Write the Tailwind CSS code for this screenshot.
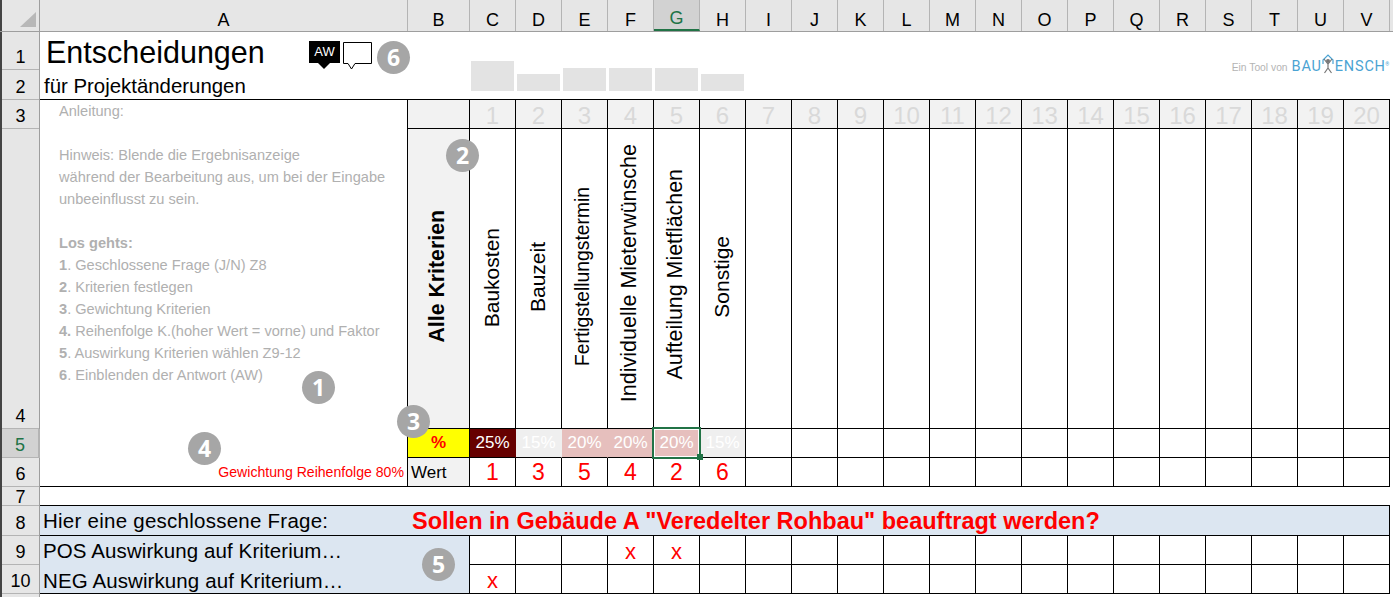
<!DOCTYPE html>
<html lang="de">
<head>
  <meta charset="UTF-8" />
  <title>Entscheidungen</title>
  <script src="https://cdn.jsdelivr.net/npm/@tailwindcss/browser@4"></script>
</head>
<body class="relative w-[1393px] h-[597px] overflow-hidden bg-white text-black font-['Liberation_Sans',Arial,sans-serif]">

  <!-- column headers -->
  <div class="flex h-8 bg-[#e6e6e6] border-b border-[#9e9e9e] text-[18px] leading-[22px] [&>div]:flex [&>div]:items-end [&>div]:justify-center [&>div]:border-r [&>div]:border-[#b4b4b4] [&>div]:w-[46px]">
    <div class="!w-10 relative !border-[#9e9e9e] border-l-2 !border-l-[#444]">
      <svg class="absolute left-0 top-0" width="38" height="31"><polygon points="18,27 34,12 34,27" fill="#b8b8b8" /></svg>
    </div>
    <div class="!w-[368px]">A</div>
    <div class="!w-[62px]">B</div>
    <div>C</div><div>D</div><div>E</div><div>F</div>
    <div class="bg-[#d2d2d2] text-[#217346] border-b-2 !border-b-[#217346]">G</div>
    <div>H</div><div>I</div><div>J</div><div>K</div><div>L</div><div>M</div><div>N</div><div>O</div><div>P</div><div>Q</div><div>R</div><div>S</div><div>T</div><div>U</div><div>V</div>
    <div class="!w-[3px] !border-0"></div>
  </div>

  <div class="flex">
    <!-- row headers -->
    <div class="w-10 border-l-2 border-[#444] bg-[#e6e6e6] text-[18px] leading-[24px] h-[565px] border-r border-r-[#9e9e9e] [&>div]:flex [&>div]:items-end [&>div]:justify-center [&>div]:border-b [&>div]:border-[#b4b4b4]">
      <div class="h-[38px]">1</div>
      <div class="h-[30px]">2</div>
      <div class="h-[29px]">3</div>
      <div class="h-[300px]">4</div>
      <div class="h-[29px] bg-[#d2d2d2] text-[#217346] border-r-2 border-r-[#217346] -mr-px">5</div>
      <div class="h-[29px]">6</div>
      <div class="h-[19px] !leading-[16px]">7</div>
      <div class="h-[30px]">8</div>
      <div class="h-[29px]">9</div>
      <div class="h-[29px]">10</div>
    </div>

    <div class="w-[1350px]">
      <!-- rows 1 and 2 -->
      <div class="flex h-[68px] border-b border-black">
        <div class="w-[430px] pl-1 relative">
          <div class="pl-[3px] -ml-px text-[30.5px] leading-[41px] h-[38px]">Entscheidungen</div>
          <div class="text-[20.4px] leading-[32px]">für Projektänderungen</div>
          <div class="absolute left-[269px] top-[9px] flex gap-[3px]">
            <div class="relative w-[31px] h-[22px] bg-black text-white text-[13px] leading-[21px] text-center">AW
              <svg class="absolute left-[9px] top-[22px]" width="12" height="7"><polygon points="0,0 12,0 6,6" fill="#000" /></svg>
            </div>
            <svg class="mt-px" width="30" height="30"><path d="M0.5 0.5H28.5V21.5H12L8.5 27L5 21.5H0.5Z" fill="#fff" stroke="#000" /></svg>
          </div>
        </div>
        <div class="flex items-end gap-[3px] w-[276px] pl-px pb-2 [&>div]:w-[43px] [&>div]:bg-[#e3e3e3]">
          <div class="h-[30px]"></div>
          <div class="h-[17px]"></div>
          <div class="h-[23px]"></div>
          <div class="h-[23px]"></div>
          <div class="h-[23px]"></div>
          <div class="h-[17px]"></div>
        </div>
        <div class="flex-1 flex items-center pl-[486px] pt-[3px] h-[66px] whitespace-nowrap">
          <span class="text-[10.3px] text-[#b4b4b4] mr-1 mt-[2px]">Ein Tool von</span>
          <span class="flex items-center font-['Roboto',sans-serif] text-[14.5px] tracking-[0.8px] text-[#4ba3d3]">BAU<svg class="mr-px -mt-[5px]" width="12" height="20" viewBox="0 0 12 20"><path d="M1 10V6L6 1L11 6V10" fill="none" stroke="#4ba3d3" stroke-width="1.2" /><circle cx="6" cy="7" r="2" fill="#777" /><path d="M6 9V14M2 5L6 10L10 5M2.5 19L6 14L9.5 19" fill="none" stroke="#777" stroke-width="1.2" /></svg>ENSCH<sup class="text-[5px] -ml-[0.5px]">®</sup></span>
        </div>
      </div>

      <!-- rows 3 to 6 -->
      <div class="flex">
        <div class="w-[368px] h-[387px] border-r border-b border-black flex flex-col">
          <div class="pl-[19px] text-[14.6px] leading-[22px] text-[#b0b0b0]">
            <div>Anleitung:</div>
            <div class="h-[22px]"></div>
            <div>Hinweis: Blende die Ergebnisanzeige</div>
            <div>während der Bearbeitung aus, um bei der Eingabe</div>
            <div>unbeeinflusst zu sein.</div>
            <div class="h-[22px]"></div>
            <div class="font-bold">Los gehts:</div>
            <div><b>1</b>. Geschlossene Frage (J/N) Z8</div>
            <div><b>2</b>. Kriterien festlegen</div>
            <div><b>3</b>. Gewichtung Kriterien</div>
            <div><b>4.</b> Reihenfolge K.(hoher Wert = vorne) und Faktor</div>
            <div><b>5</b>. Auswirkung Kriterien wählen Z9-12</div>
            <div><b>6</b>. Einblenden der Antwort (AW)</div>
          </div>
          <div class="mt-auto pr-[3px] pb-[5px] text-right text-[14.1px] leading-[18px] text-[#ff0000]">Gewichtung Reihenfolge 80%</div>
        </div>

        <div class="w-[982px] text-center">
          <!-- row 3 -->
          <div class="flex h-[29px] text-[24px] text-[#d9d9d9] bg-[#f2f2f2] [&>div]:w-[46px] [&>div]:border-r [&>div]:border-b [&>div]:border-black [&>div]:leading-[31px]">
            <div class="!w-[62px]"></div>
            <div>1</div><div>2</div><div>3</div><div>4</div><div>5</div><div>6</div><div>7</div><div>8</div><div>9</div><div>10</div><div>11</div><div>12</div><div>13</div><div>14</div><div>15</div><div>16</div><div>17</div><div>18</div><div>19</div><div>20</div>
          </div>
          <!-- row 4 -->
          <div class="flex h-[300px] [&>div]:w-[46px] [&>div]:border-r [&>div]:border-b [&>div]:border-black [&>div]:flex [&>div]:items-center [&>div]:justify-center [&_span]:[writing-mode:vertical-rl] [&_span]:rotate-180 [&_span]:whitespace-nowrap [&_span]:-ml-[2px]">
            <div class="!w-[62px] bg-[#f2f2f2]"><span class="font-bold text-[21.3px] -mt-1">Alle Kriterien</span></div>
            <div><span class="text-[21px] -mt-[2px]">Baukosten</span></div>
            <div><span class="text-[21px] -mt-[2px]">Bauzeit</span></div>
            <div><span class="text-[19.3px] -mt-1">Fertigstellungstermin</span></div>
            <div><span class="text-[21.5px] -mt-[10px]">Individuelle Mieterwünsche</span></div>
            <div><span class="text-[21.4px] -mt-2">Aufteilung Mietflächen</span></div>
            <div><span class="text-[21px] -mt-1">Sonstige</span></div>
            <div></div><div></div><div></div><div></div><div></div><div></div><div></div><div></div><div></div><div></div><div></div><div></div><div></div><div></div>
          </div>
          <!-- row 5 -->
          <div class="flex h-[29px] text-[17px] leading-[28px] text-white [&>div]:w-[46px] [&>div]:border-r [&>div]:border-b [&>div]:border-black">
            <div class="!w-[62px] bg-[#ffff00] text-[#ff0000] font-bold">%</div>
            <div class="bg-[#660000] !border-r-[#660000]">25%</div>
            <div class="bg-[#efefef] !border-r-[#efefef]">15%</div>
            <div class="bg-[#e6bfbd] !border-r-[#e6bfbd]">20%</div>
            <div class="bg-[#e6bfbd] !border-r-[#e6bfbd]">20%</div>
            <div class="relative bg-[#e6bfbd] !border-r-[#e6bfbd]">20%
              <div class="absolute -left-[2px] -top-[2px] w-[49px] h-[32px] border-2 border-[#217346] shadow-[inset_0_0_0_1px_#fff]"></div>
              <div class="absolute left-[43px] top-[25px] w-[6px] h-[6px] bg-[#217346]"></div>
            </div>
            <div class="bg-[#efefef]">15%</div>
            <div></div><div></div><div></div><div></div><div></div><div></div><div></div><div></div><div></div><div></div><div></div><div></div><div></div><div></div>
          </div>
          <!-- row 6 -->
          <div class="flex h-[29px] text-[23px] leading-[29px] text-[#ff0000] [&>div]:w-[46px] [&>div]:border-r [&>div]:border-b [&>div]:border-black">
            <div class="!w-[62px] bg-[#f2f2f2] text-black text-[17px] text-left pl-[3px]">Wert</div>
            <div>1</div><div>3</div><div>5</div><div>4</div><div>2</div><div>6</div>
            <div></div><div></div><div></div><div></div><div></div><div></div><div></div><div></div><div></div><div></div><div></div><div></div><div></div><div></div>
          </div>
        </div>
      </div>

      <!-- row 7 -->
      <div class="h-[19px] border-b border-black"></div>

      <!-- row 8 -->
      <div class="flex items-center h-[30px] pt-px bg-[#dce6f1] border-r border-b border-black text-[20.5px] leading-[28px]">
        <div class="w-[372px] pl-[3px] tracking-[0.25px]">Hier eine geschlossene Frage:</div>
        <div class="font-bold text-[23.5px] text-[#ff0000]">Sollen in Gebäude A "Veredelter Rohbau" beauftragt werden?</div>
      </div>

      <!-- rows 9 and 10 -->
      <div class="flex h-[58px]">
        <div class="w-[430px] bg-[#dce6f1] border-r border-b border-black pl-[3px] text-[20.5px] leading-[29px] tracking-[0.1px]">
          <div>POS Auswirkung auf Kriterium…</div>
          <div class="mt-px">NEG Auswirkung auf Kriterium…</div>
        </div>
        <div class="w-[920px]">
          <div class="flex h-[29px] text-[22px] leading-[32px] text-center text-[#ff0000] [&>div]:w-[46px] [&>div]:border-r [&>div]:border-b [&>div]:border-black">
            <div></div><div></div><div></div><div>x</div><div>x</div>
            <div></div><div></div><div></div><div></div><div></div><div></div><div></div><div></div><div></div><div></div><div></div><div></div><div></div><div></div><div></div>
          </div>
          <div class="flex h-[29px] text-[22px] leading-[32px] text-center text-[#ff0000] [&>div]:w-[46px] [&>div]:border-r [&>div]:border-b [&>div]:border-black">
            <div>x</div><div></div><div></div><div></div><div></div>
            <div></div><div></div><div></div><div></div><div></div><div></div><div></div><div></div><div></div><div></div><div></div><div></div><div></div><div></div><div></div>
          </div>
        </div>
      </div>
    </div>
  </div>

  <!-- numbered markers lying over the sheet -->
  <div class="font-['Open_Sans',sans-serif] font-bold text-[23px] leading-[33px] text-center text-white [&>div]:absolute [&>div]:w-[33px] [&>div]:h-[33px] [&>div]:rounded-full [&>div]:bg-[#a6a6a6]">
    <div class="left-[302px] top-[371px]">1</div>
    <div class="left-[446px] top-[139px]">2</div>
    <div class="left-[397px] top-[405px]">3</div>
    <div class="left-[188px] top-[432px]">4</div>
    <div class="left-[422px] top-[548px]">5</div>
    <div class="left-[377px] top-[41px]">6</div>
  </div>
</body>
</html>
